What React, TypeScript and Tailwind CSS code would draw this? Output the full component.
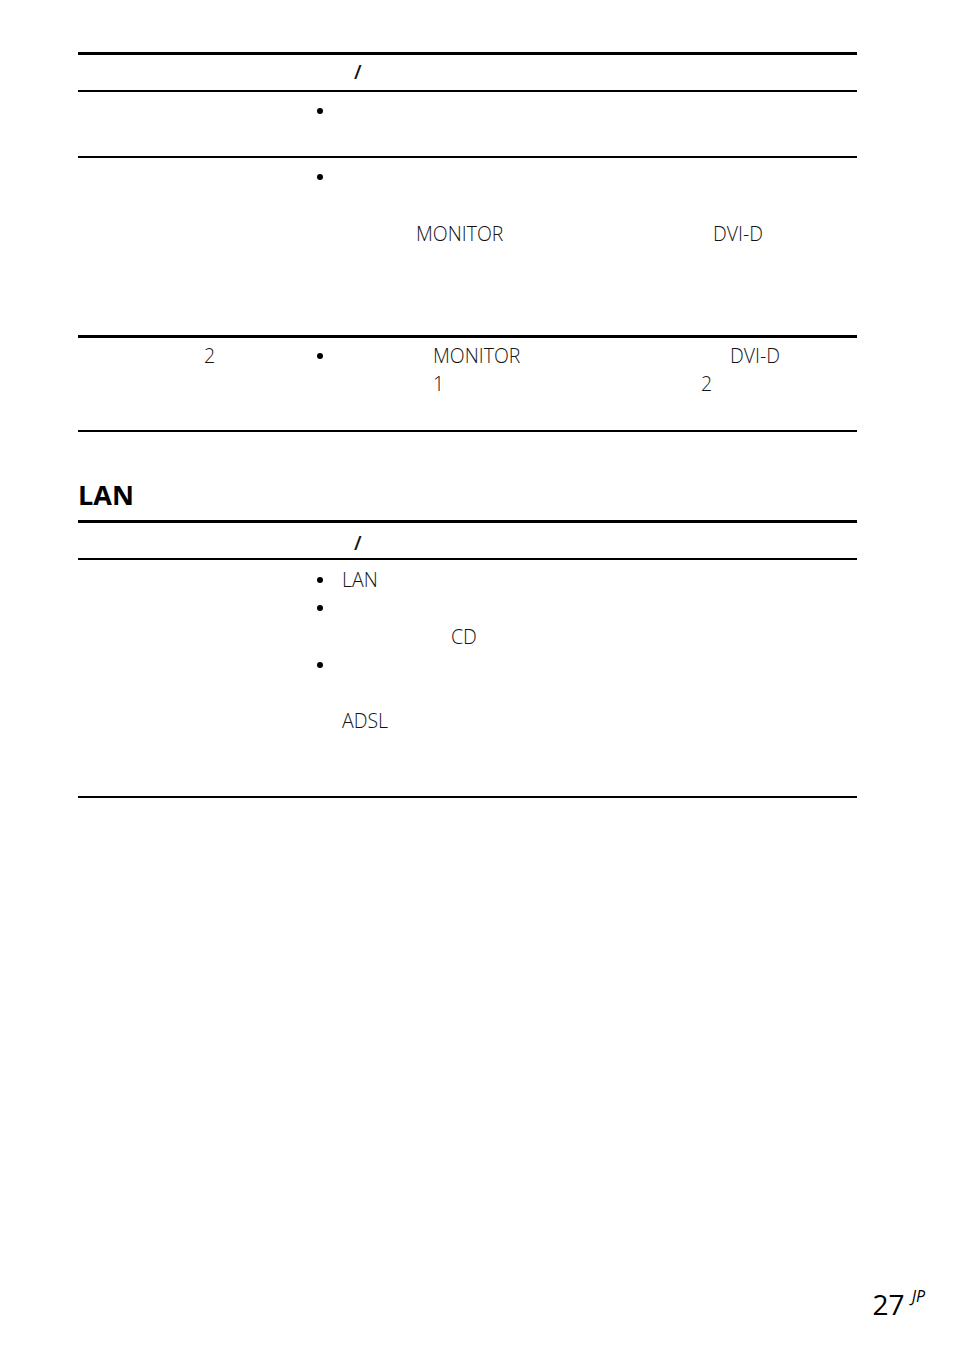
import React from "react";

const font = { fontFamily: '"Open Sans", "Noto Sans CJK JP", sans-serif' };

function Bullet() {
  return (
    <span className="flex h-[28.3px] w-[26px] shrink-0 items-center">
      <span className="ml-[1px] mt-[-1px] block h-[6px] w-[6px] rounded-full bg-black" />
    </span>
  );
}

export default function App() {
  return (
    <div
      className="relative flex h-[1354px] w-[954px] flex-col bg-white text-[19.5px] font-light leading-[28.3px] text-[#141414]"
      style={font}
    >
      <div className="ml-[78px] mt-[52px] w-[779px]">
        {/* Table 1 */}
        <div className="h-[3px] bg-black" />
        <div className="flex h-[35px] pt-[3px]">
          <div className="w-[238px]" />
          <div className="flex font-semibold">
            <span className="w-[38px]" />
            <span>/</span>
          </div>
        </div>
        <div className="h-[2px] bg-black" />
        {/* Row 1 */}
        <div className="flex h-[64px] pt-[5px]">
          <div className="w-[238px]" />
          <div className="flex flex-col">
            <div className="flex">
              <Bullet />
            </div>
          </div>
        </div>
        <div className="h-[2px] bg-black" />
        {/* Row 2 */}
        <div className="flex h-[177px] pt-[5px]">
          <div className="w-[238px]" />
          <div className="flex flex-col">
            <div className="flex h-[28.3px]">
              <Bullet />
            </div>
            <div className="h-[28.3px]" />
            <div className="flex h-[28.3px]">
              <span className="w-[100px] shrink-0" />
              <span className="w-[297px] shrink-0">MONITOR</span>
              <span>DVI-D</span>
            </div>
          </div>
        </div>
        <div className="h-[3px] bg-black" />
        {/* Row 3 */}
        <div className="flex h-[92px] pt-[4px]">
          <div className="flex w-[238px]">
            <span className="w-[126px] shrink-0" />
            <span>2</span>
          </div>
          <div className="flex flex-col">
            <div className="flex h-[28.3px]">
              <Bullet />
              <span className="w-[91px] shrink-0" />
              <span className="w-[297px] shrink-0">MONITOR</span>
              <span>DVI-D</span>
            </div>
            <div className="flex h-[28.3px]">
              <span className="w-[117px] shrink-0" />
              <span className="w-[268px] shrink-0">1</span>
              <span>2</span>
            </div>
          </div>
        </div>
        <div className="h-[2px] bg-black" />

        {/* LAN heading */}
        <div className="flex h-[88px] items-start pt-[45px]">
          <h2 className="text-[27px] font-bold leading-[36px] text-black">LAN</h2>
        </div>

        {/* Table 2 */}
        <div className="h-[3px] bg-black" />
        <div className="flex h-[35px] pt-[6px]">
          <div className="w-[238px]" />
          <div className="flex font-semibold">
            <span className="w-[38px]" />
            <span>/</span>
          </div>
        </div>
        <div className="h-[2px] bg-black" />
        <div className="flex h-[236px] pt-[6px]">
          <div className="w-[238px]" />
          <div className="flex flex-col">
            <div className="flex h-[28.3px]">
              <Bullet />
              <span>LAN</span>
            </div>
            <div className="flex h-[28.3px]">
              <Bullet />
            </div>
            <div className="flex h-[28.3px]">
              <span className="w-[135px] shrink-0" />
              <span>CD</span>
            </div>
            <div className="flex h-[28.3px]">
              <Bullet />
            </div>
            <div className="h-[28.3px]" />
            <div className="flex h-[28.3px]">
              <span className="w-[26px] shrink-0" />
              <span>ADSL</span>
            </div>
          </div>
        </div>
        <div className="h-[2px] bg-black" />
      </div>

      {/* Page number */}
      <div className="mt-auto flex items-start justify-end pb-[36px] pr-[29px]">
        <span className="text-[28px] font-normal leading-[28px] text-black">27</span>
        <span className="ml-[7px] mt-[-2px] text-[16px] font-normal italic leading-[16px] text-black">
          JP
        </span>
      </div>
    </div>
  );
}
